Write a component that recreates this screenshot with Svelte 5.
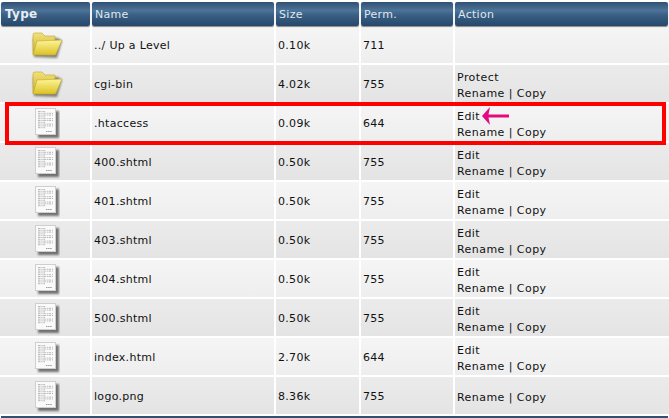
<script>
	const rows = [
		{ type: 'folder', name: '../ Up a Level', size: '0.10k', perm: '711', actions: [] },
		{ type: 'folder', name: 'cgi-bin', size: '4.02k', perm: '755', actions: ['Protect', 'Rename | Copy'] },
		{ type: 'file', name: '.htaccess', size: '0.09k', perm: '644', actions: ['Edit', 'Rename | Copy'] },
		{ type: 'file', name: '400.shtml', size: '0.50k', perm: '755', actions: ['Edit', 'Rename | Copy'] },
		{ type: 'file', name: '401.shtml', size: '0.50k', perm: '755', actions: ['Edit', 'Rename | Copy'] },
		{ type: 'file', name: '403.shtml', size: '0.50k', perm: '755', actions: ['Edit', 'Rename | Copy'] },
		{ type: 'file', name: '404.shtml', size: '0.50k', perm: '755', actions: ['Edit', 'Rename | Copy'] },
		{ type: 'file', name: '500.shtml', size: '0.50k', perm: '755', actions: ['Edit', 'Rename | Copy'] },
		{ type: 'file', name: 'index.html', size: '2.70k', perm: '644', actions: ['Edit', 'Rename | Copy'] },
		{ type: 'file', name: 'logo.png', size: '8.36k', perm: '755', actions: ['Rename | Copy'] }
	];
	const textLines = [0, 1, 2, 3, 4, 5, 6, 7, 8, 9];
</script>

<svg class="defs" width="0" height="0">
	<defs>
		<linearGradient id="folderFront" x1="0" y1="0" x2="0" y2="1">
			<stop offset="0" stop-color="#fdf49a" />
			<stop offset="1" stop-color="#dcc222" />
		</linearGradient>
		<linearGradient id="folderBack" x1="0" y1="0" x2="0" y2="1">
			<stop offset="0" stop-color="#f3e27a" />
			<stop offset="1" stop-color="#c9ad2a" />
		</linearGradient>
		<filter id="soft" x="-30%" y="-30%" width="170%" height="170%">
			<feGaussianBlur stdDeviation="1.1" />
		</filter>
	</defs>
</svg>

<div class="browser">
	<div class="row head">
		<div class="th type">Type</div>
		<div class="th">Name</div>
		<div class="th">Size</div>
		<div class="th">Perm.</div>
		<div class="th">Action</div>
	</div>

	{#each rows as row, i}
		<div class="row" class:alt={i % 2 === 1}>
			<div class="td icon">
				{#if row.type === 'folder'}
					<svg width="36" height="30" viewBox="0 0 36 30">
						<path d="M5 8 L30 8 L34 11 L29 28 L6 27 Z" fill="#3d3d2e" opacity="0.6" filter="url(#soft)" />
						<path d="M5 24 L5 5 Q5 3 7 3 L14 3 L17 6 L27 6 L27 10 L8 24 Z" fill="url(#folderBack)" stroke="#bda62e" stroke-width="0.6" />
						<path d="M9 11 L34 10 L28 24 Q28 25 26 25 L5 25 Z" fill="url(#folderFront)" stroke="#c4aa2a" stroke-width="0.6" />
					</svg>
				{:else}
					<svg width="28" height="34" viewBox="0 0 28 34">
						<rect x="6" y="5" width="21" height="27" fill="#333" opacity="0.65" filter="url(#soft)" />
						<rect x="3.5" y="2.5" width="20" height="26" fill="#fafafa" stroke="#cfcfcf" />
						{#each textLines as l}
							<path d="M6 {5.5 + l * 1.8} h{l % 3 === 0 ? 7 : 15}" stroke="#a8a8a8" stroke-width="0.8" stroke-dasharray="2.5 0.9 1.2 0.7" />
						{/each}
						<path d="M14 25.5 h6" stroke="#9a9a9a" stroke-width="1.2" stroke-dasharray="1.5 0.6" />
					</svg>
				{/if}
			</div>
			<div class="td">{row.name}</div>
			<div class="td">{row.size}</div>
			<div class="td">{row.perm}</div>
			<div class="td action">
				{#each row.actions as action}
					<span>{action}</span>
				{/each}
			</div>
		</div>
	{/each}
	<div class="foot"></div>

	<div class="highlight"></div>
	<svg class="arrow" width="28" height="18" viewBox="0 0 28 18">
		<path d="M0 9 L8 0 L6.5 7.5 L27 7.5 L27 10.5 L6.5 10.5 L8 18 Z" fill="#e6087e" />
	</svg>
</div>

<style>
	:global(body) {
		background: #fff;
	}

	.defs {
		position: absolute;
	}

	.browser {
		position: relative;
		width: 669px;
		height: 418px;
		padding-top: 2px;
		box-sizing: border-box;
		overflow: hidden;
		font-family: 'DejaVu Sans', Verdana, sans-serif;
		font-size: 11px;
		letter-spacing: 0.3px;
		color: #111;
	}

	.row {
		display: grid;
		grid-template-columns: 89px 182px 83px 92px 1fr;
		height: 39px;
		padding: 0 1px;
		gap: 0 2px;
		box-sizing: border-box;
		background: linear-gradient(#f5f5f5, #eeeeee);
		border-bottom: 2px solid #fff;
	}

	.row.alt {
		background: linear-gradient(#ebebeb, #e4e4e4);
	}

	.row.head {
		height: 24px;
		background: #fff;
		border-bottom: 0;
	}

	.th {
		display: flex;
		align-items: center;
		padding-left: 3px;
		border-radius: 2px;
		background: linear-gradient(#2f5173 0%, #4d7398 35%, #3a5f84 55%, #25476a 100%);
		box-shadow: 0 1px 1px #888;
		color: #dfe8f0;
	}

	.th.type {
		font-weight: bold;
		padding-left: 4px;
		color: #e8eef4;
		font-size: 12px;
	}

	.td {
		display: flex;
		align-items: center;
		padding: 2px 0 0 2px;
		box-shadow: 2px 0 0 #fff;
	}

	.td:last-child {
		box-shadow: none;
	}

	.icon {
		justify-content: center;
		padding: 0;
	}

	.action {
		flex-direction: column;
		align-items: flex-start;
		justify-content: center;
		padding-top: 4px;
		line-height: 16px;
		letter-spacing: 0.45px;
	}

	.foot {
		height: 2px;
		margin: 0 1px;
		background: #2f5173;
	}

	.highlight {
		position: absolute;
		left: 5px;
		top: 102px;
		width: 661px;
		height: 43px;
		box-sizing: border-box;
		border: 4px solid #f00;
	}

	.arrow {
		position: absolute;
		left: 482px;
		top: 107px;
	}
</style>
